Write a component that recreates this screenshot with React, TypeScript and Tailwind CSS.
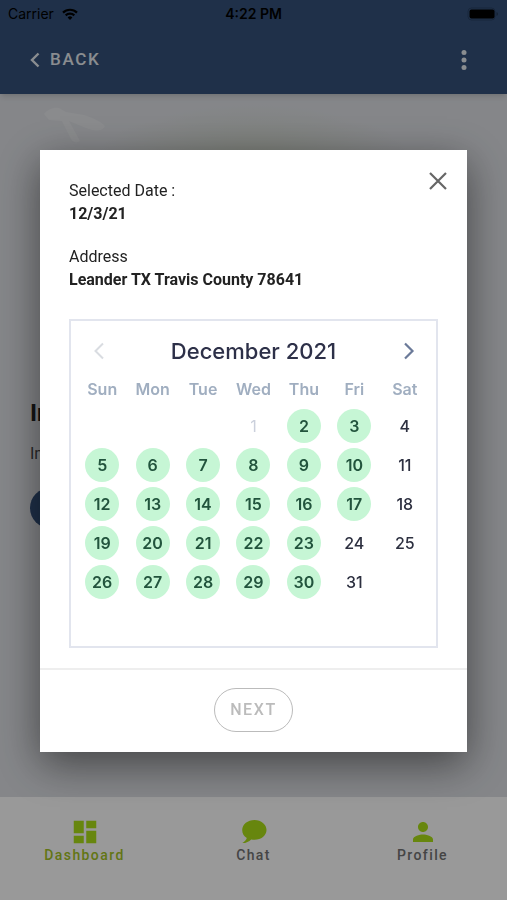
import React from 'react'
import { MdDashboard, MdPerson } from 'react-icons/md'

const weekdays = ['Sun', 'Mon', 'Tue', 'Wed', 'Thu', 'Fri', 'Sat']

// December 2021 starts on a Wednesday
const firstWeekday = 3
const daysInMonth = 31
const available = [2, 3, 5, 6, 7, 8, 9, 10, 12, 13, 14, 15, 16, 17, 19, 20, 21, 22, 23, 26, 27, 28, 29, 30]

const weeks = [0, 1, 2, 3, 4, 5].map((week) =>
  weekdays.map((_, index) => {
    const day = week * 7 + index - firstWeekday + 1
    return day > 0 && day <= daysInMonth ? day : null
  })
)

const dayStyle = (day: number) => {
  if (available.includes(day)) {
    return 'bg-[#c6f6d5] font-semibold text-[#22543d]'
  }
  if (day === 1) {
    return 'font-normal text-[#cbd0dc]'
  }
  return 'font-medium text-[#2d3040]'
}

const StatusBar: React.FC = () => (
  <div className="grid h-7 grid-cols-3 items-center px-2 font-['Inter',sans-serif] text-sm text-black">
    <div className="flex items-center gap-2">
      <span>Carrier</span>
      <svg viewBox="0 0 16 12" className="h-3 w-4" fill="none" stroke="currentColor" strokeWidth="2.2">
        <path d="M1 4.6a10 10 0 0 1 14 0" />
        <path d="M3.7 7.4a6.2 6.2 0 0 1 8.6 0" />
        <path d="M8 12 5.6 9.4a3.5 3.5 0 0 1 4.8 0z" fill="currentColor" stroke="none" />
      </svg>
    </div>
    <span className="text-center font-semibold">4:22 PM</span>
    <svg viewBox="0 0 32 14" className="h-3.5 w-8 justify-self-end">
      <rect x="1" y="1" width="27" height="12" rx="3.5" fill="none" stroke="#000" strokeOpacity="0.2" />
      <rect x="2.5" y="2.5" width="25" height="9" rx="2" fill="#000" />
      <path d="M29.5 5v4q1.5-.5 1.5-2t-1.5-2" fill="#000" fillOpacity="0.3" />
    </svg>
  </div>
)

const Header: React.FC = () => (
  <header className="z-10 bg-[#34517b] pb-0.5 shadow-md">
    <StatusBar />
    <div className="flex h-16 items-center justify-between pr-8 pl-7">
      <button className="flex items-center gap-2 text-[17px] font-medium tracking-widest text-[#e6ebf0]">
        <svg viewBox="0 0 14 16" className="h-4 w-3.5" fill="none" stroke="currentColor" strokeWidth="2.4">
          <path d="M10.5 1.5 4 8l6.5 6.5" />
        </svg>
        BACK
      </button>
      <button aria-label="More" className="text-[#e6ebf0]">
        <svg viewBox="0 0 22 22" className="h-[22px] w-[22px]" fill="currentColor">
          <circle cx="11" cy="3.5" r="2.5" />
          <circle cx="11" cy="11" r="2.5" />
          <circle cx="11" cy="18.5" r="2.5" />
        </svg>
      </button>
    </div>
  </header>
)

const Background: React.FC = () => (
  <main className="relative flex flex-1 flex-col items-start bg-[radial-gradient(ellipse_160px_60px_at_50%_70px,#ccd2c5,transparent)] bg-[#dee0e5] px-[30px] pt-[304px]">
    <svg viewBox="0 0 70 46" className="absolute top-2.5 left-10 h-[46px] w-[70px]" fill="#fff" fillOpacity="0.25">
      <path d="M4 10C7 6 13 3 19 4l7 4 18 3c10 3 17 7 21 11-3 6-11 5-19 2L29 17l11 20c-4 3-8 1-10-4L22 17 9 16z" />
    </svg>
    <h1 className="text-2xl leading-[30px] font-bold text-[#222]">In</h1>
    <p className="mt-3 leading-7 text-[#444]">In</p>
    <button aria-label="Start" className="mt-5 h-10 w-40 rounded-full bg-[#34517b]" />
  </main>
)

const ChatIcon: React.FC = () => (
  <svg viewBox="0 0 26 24" className="h-6 w-[26px]" fill="currentColor">
    <path d="M13.5 0C6.800 0 1.200 4.300 1.200 10c0 3.500 1.700 6.200 4.600 8-.6 1.900-2.300 3.700-4.500 5.100 3.600.1 6.700-1.600 8.900-3.700 1.100.3 2.200.4 3.300.4 6.700 0 12-4.300 12-9.800S20.200 0 13.500 0z" />
  </svg>
)

const tabs = [
  { label: 'Dashboard', icon: <MdDashboard size={30} />, color: 'text-[#a4c424]' },
  { label: 'Chat', icon: <ChatIcon />, color: 'text-[#737373]' },
  { label: 'Profile', icon: <MdPerson size={30} />, color: 'text-[#737373]' },
]

const TabBar: React.FC = () => (
  <nav className="grid h-[103px] grid-cols-3 bg-white pt-5">
    {tabs.map((tab) => (
      <a key={tab.label} href="#" className="flex flex-col items-center">
        <span className="flex h-[30px] items-center text-[#ace018]">{tab.icon}</span>
        <span className={`text-sm leading-4 font-medium tracking-widest ${tab.color}`}>{tab.label}</span>
      </a>
    ))}
  </nav>
)

const Calendar: React.FC = () => (
  <section className="border-2 border-[#e2e5ee] px-1.5 pt-2.5 pb-1.5 font-['Inter',sans-serif]">
    <div className="flex h-10 items-center justify-between px-[15px]">
      <button aria-label="Previous month" disabled className="text-[#d9dce1]">
        <svg viewBox="0 0 14 18" className="h-[18px] w-3.5" fill="none" stroke="currentColor" strokeWidth="2">
          <path d="M11 1.5 3.5 9l7.5 7.5" />
        </svg>
      </button>
      <h2 className="text-[22px] font-medium text-[#2d3048]">December 2021</h2>
      <button aria-label="Next month" className="text-[#6b7a99]">
        <svg viewBox="0 0 14 18" className="h-[18px] w-3.5" fill="none" stroke="currentColor" strokeWidth="2.2">
          <path d="m4 1.5 7.500 7.500L4 16.500" />
        </svg>
      </button>
    </div>
    <table className="w-full table-fixed border-collapse text-center">
      <thead>
        <tr className="h-[35px]">
          {weekdays.map((weekday) => (
            <th key={weekday} className="p-0 font-semibold text-[#a0aec0]">
              {weekday}
            </th>
          ))}
        </tr>
      </thead>
      <tbody>
        {weeks.map((week, index) => (
          <tr key={index} className="h-[39px]">
            {week.map((day, column) => (
              <td key={column} className="p-0">
                {day && (
                  <button className={`mx-auto flex size-[34px] items-center justify-center rounded-full ${dayStyle(day)}`}>
                    {day}
                  </button>
                )}
              </td>
            ))}
          </tr>
        ))}
      </tbody>
    </table>
  </section>
)

const Modal: React.FC = () => (
  <div className="fixed inset-0 z-20 flex items-center justify-center bg-black/40 px-10 pt-0.5">
    <div role="dialog" className="relative w-full max-w-lg bg-white shadow-[0_12px_40px_rgba(0,0,0,0.5)]">
      <button aria-label="Close" className="absolute top-[22px] right-5 text-[#666]">
        <svg viewBox="0 0 18 18" className="h-[18px] w-[18px]" fill="none" stroke="currentColor" strokeWidth="2.2">
          <path d="m1 1 16 16M17 1 1 17" />
        </svg>
      </button>
      <div className="flex flex-col gap-7 px-[29px] pt-[29px] pb-5">
        <dl className="flex flex-col gap-5 leading-[23px] text-[#222]">
          <div>
            <dt>Selected Date :</dt>
            <dd className="font-bold">12/3/21</dd>
          </div>
          <div>
            <dt>Address</dt>
            <dd className="font-bold">Leander TX Travis County 78641</dd>
          </div>
        </dl>
        <Calendar />
      </div>
      <footer className="flex justify-center border-t-2 border-[#eee] pt-[18px] pb-5">
        <button disabled className="h-11 rounded-full border border-[#bbb] px-[15px] font-medium tracking-widest text-[#bbb]">
          NEXT
        </button>
      </footer>
    </div>
  </div>
)

const App: React.FC = () => {
  return (
    <div className="flex min-h-screen flex-col font-[Roboto,sans-serif]">
      <Header />
      <Background />
      <TabBar />
      <Modal />
    </div>
  )
}

export default App
